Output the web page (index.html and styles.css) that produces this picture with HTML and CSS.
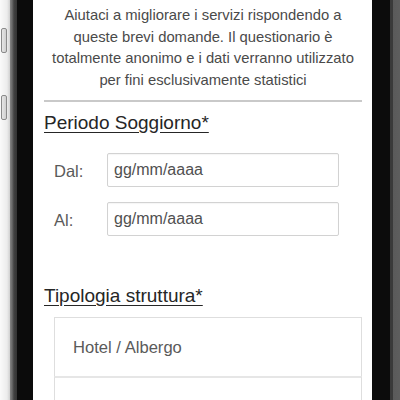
FILE: index.html
```html
<!DOCTYPE html>
<html lang="it">
<head>
<meta charset="utf-8">
<title>Questionario</title>
<link rel="stylesheet" href="styles.css">
</head>
<body>
<div class="device">
  <div class="bezel-left">
    <span class="side-btn"></span>
    <span class="side-btn"></span>
  </div>
  <main class="screen">
    <p class="intro">Aiutaci a migliorare i servizi rispondendo a queste brevi domande. Il questionario è totalmente anonimo e i dati verranno utilizzato per fini esclusivamente statistici</p>
    <hr class="divider">
    <h2 class="section-title">Periodo Soggiorno*</h2>
    <div class="form-rows">
      <label class="form-row">
        <span class="form-label">Dal:</span>
        <input class="form-input" type="text" placeholder="gg/mm/aaaa">
      </label>
      <label class="form-row">
        <span class="form-label">Al:</span>
        <input class="form-input" type="text" placeholder="gg/mm/aaaa">
      </label>
    </div>
    <h2 class="section-title section-title-2">Tipologia struttura*</h2>
    <ul class="list">
      <li class="list-item">Hotel / Albergo</li>
      <li class="list-item">Residence</li>
    </ul>
  </main>
  <div class="bezel-right"></div>
</div>
</body>
</html>
```

FILE: styles.css
```css
* { box-sizing: border-box; }

html, body {
  margin: 0;
  padding: 0;
  background: #ffffff;
}

body {
  font-family: "Liberation Sans", Arial, sans-serif;
  width: 400px;
  height: 400px;
  overflow: hidden;
}

.device {
  display: flex;
  width: 400px;
  height: 400px;
  overflow: hidden;
}

.bezel-left {
  flex: 0 0 33px;
  display: flex;
  flex-direction: column;
  gap: 42px;
  padding-top: 28px;
  padding-left: 1px;
  background: linear-gradient(to right,
    #fafafa 0, #ececec 7px, #d0d0d0 10px,
    #858585 10px, #6a6a6a 12px, #404040 14px, #333 17px,
    #0b0b0b 17px, #0b0b0b 33px);
}

.side-btn {
  display: block;
  width: 6px;
  height: 25px;
  border: 1px solid #8a8a8a;
  border-radius: 2px;
  background: linear-gradient(to right, #e6e6e6, #cfcfcf);
}

.bezel-right {
  flex: 0 0 28px;
  background: linear-gradient(to right,
    #0c0c0c 0, #0c0c0c 18px,
    #3a3a3a 18px, #3a3a3a 21px,
    #5a5a5a 21px, #5e5e5e 28px);
}

.screen {
  flex: 0 0 339px;
  background: #fff;
  padding: 5px 10px 0 11px;
  overflow: hidden;
}

.intro {
  margin: 0;
  text-align: center;
  font-size: 14.8px;
  line-height: 21.5px;
  color: #4a4a4a;
}

.divider {
  margin: 9px 0 0 0;
  border: 0;
  border-top: 2px solid #c9c9c9;
  height: 0;
}

.section-title {
  margin: 10px 0 0 0;
  font-size: 19px;
  line-height: 22px;
  font-weight: normal;
  color: #262626;
  text-decoration: underline;
  text-underline-offset: 3px;
}

.section-title-2 {
  margin-top: 49px;
}

.form-rows {
  display: flex;
  flex-direction: column;
  gap: 15px;
  margin-top: 19px;
  padding-left: 10px;
  padding-right: 23px;
}

.form-row {
  display: flex;
  align-items: center;
}

.form-label {
  flex: 0 0 53px;
  font-size: 16.5px;
  color: #5a5a5a;
  padding-top: 2px;
}

.form-input {
  flex: 1 1 auto;
  min-width: 0;
  height: 34px;
  padding: 0 6px;
  border: 1px solid #d2d2d2;
  border-radius: 2px;
  font-family: "Liberation Sans", Arial, sans-serif;
  font-size: 16px;
  color: #444;
  background: #fff;
  box-shadow: inset 0 1px 1px rgba(0,0,0,0.04);
}

.form-input::placeholder {
  color: #505050;
  opacity: 1;
}

.list {
  list-style: none;
  margin: 10px 0 0 10px;
  padding: 0;
}

.list-item {
  font-size: 16.6px;
  line-height: 19px;
  color: #5a5a5a;
  padding: 20px 18px 19px;
  border: 1px solid #dedede;
  border-bottom: 0;
}

.list-item + .list-item {
  border-top: 2px solid #e6e6e6;
}
```
